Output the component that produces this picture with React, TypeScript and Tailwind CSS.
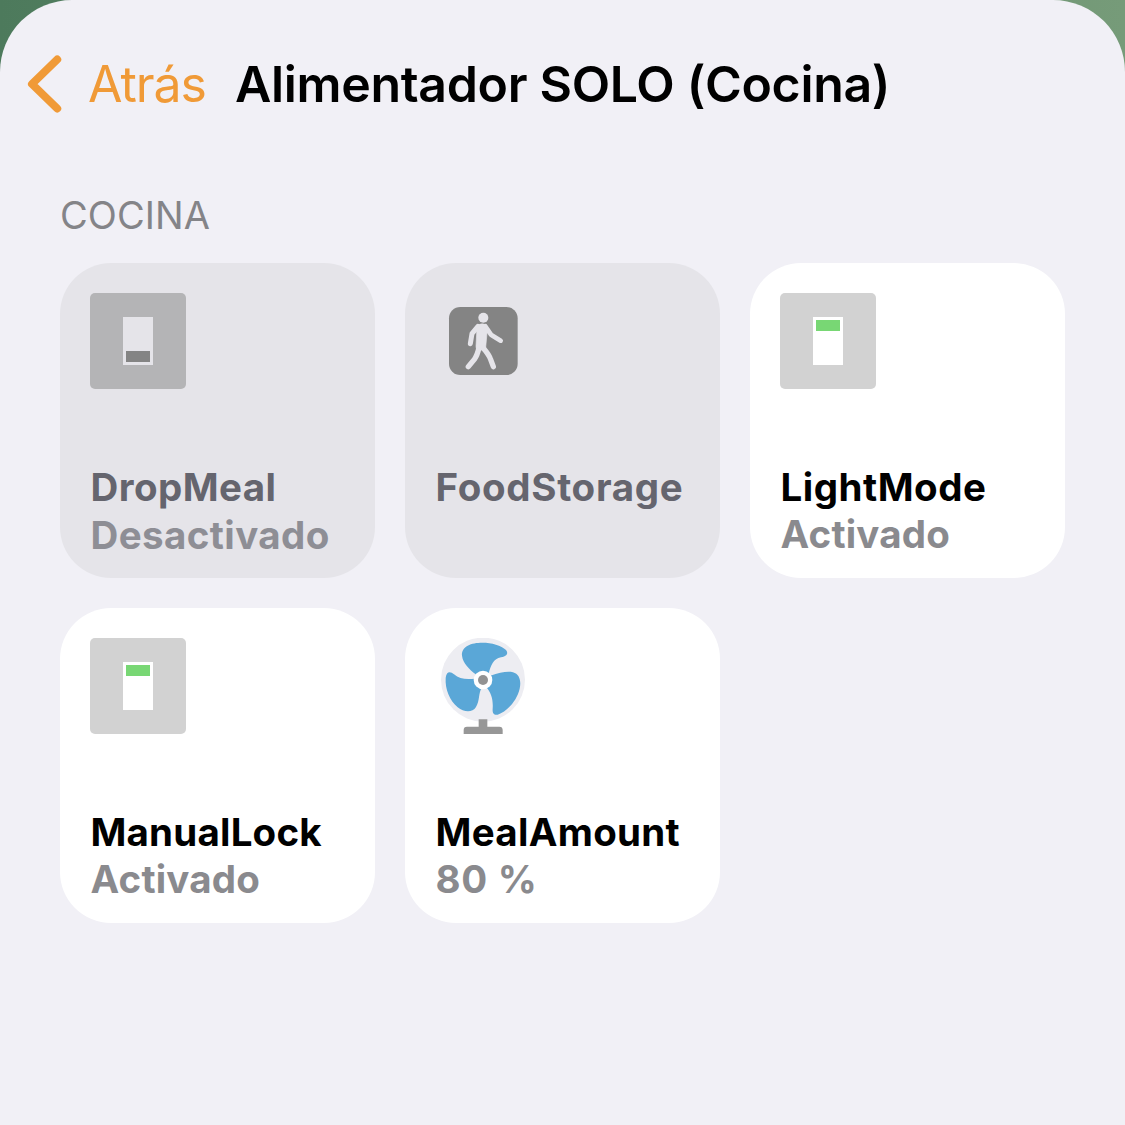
import type { ReactNode } from "react";

function SwitchIcon({ on }: { on: boolean }) {
  return (
    <div className={`flex size-24 items-center justify-center rounded-[5px] ${on ? "bg-[#d2d2d2]" : "bg-[#b4b4b6]"}`}>
      <div className={`flex h-12 w-[30px] flex-col p-[3px] ${on ? "justify-start bg-white" : "justify-end bg-[#e5e4e9]"}`}>
        <div className={`h-[11px] ${on ? "bg-[#78d774]" : "bg-[#848484]"}`} />
      </div>
    </div>
  );
}

function MotionIcon() {
  return (
    <svg className="size-24" viewBox="-15 -15 288 288">
      <rect x="27" y="27" width="206" height="204" rx="34" fill="#848484" />
      <g fill="#e5e4e9" stroke="#e5e4e9" strokeLinecap="round" strokeLinejoin="round">
        <circle cx="130" cy="59" r="15" stroke="none" />
        <path d="M115 80 Q127 75 138 80 Q143 84 142 94 L137 149 Q137 155 132 156 L114 156 Q107 153 108 145 L111 88 Z" strokeWidth="2" />
        <path d="M114 85 L96 107 L91 137" fill="none" strokeWidth="15" />
        <path d="M136 85 L153 110 L182 128" fill="none" strokeWidth="14" />
        <path d="M117 149 Q112 172 103 184 L85 206" fill="none" strokeWidth="16" />
        <path d="M129 149 Q147 170 151 182 L160 206" fill="none" strokeWidth="16" />
      </g>
    </svg>
  );
}

function FanIcon() {
  return (
    <svg className="size-24" viewBox="15 24 288 288">
      <circle cx="159" cy="149" r="126" fill="#ededf2" />
      <path d="M146 268h26v22h36q10 0 10 10v13H101v-13q0-10 10-10h35z" fill="#979797" />
      <g fill="#5aa7d7">
        <path d="M137 133C118 117 99 101 96 77C94 48 124 38 157 38C185 38 214 46 228 60C238 73 226 80 213 82C190 87 183 105 176 130Z" />
        <path d="M134 146C108 149 88 147 72 133C61 123 49 124 47 144C45 178 59 211 83 232C102 247 127 249 138 231C150 211 145 189 155 174Z" />
        <path d="M181 137C210 128 231 123 249 127C269 132 274 154 269 176C261 211 232 244 203 254C190 256 187 247 188 236C190 208 183 188 169 172Z" />
      </g>
      <circle cx="159" cy="150" r="28" fill="#fff" />
      <circle cx="159" cy="150" r="15" fill="#929292" />
    </svg>
  );
}

type CardProps = {
  icon: ReactNode;
  name: string;
  status?: string;
  active?: boolean;
  nameSpacing: string;
  statusSpacing?: string;
};

function Card({ icon, name, status, active, nameSpacing, statusSpacing = "" }: CardProps) {
  return (
    <div className={`flex h-[315px] flex-col rounded-[51px] px-[30px] pt-[30px] ${active ? "bg-white" : "bg-[#e5e4e9]"}`}>
      {icon}
      <div className="mt-[75px] ml-[0.5px] whitespace-nowrap text-[38.5px] leading-[47px] font-bold">
        <div className={`${nameSpacing} ${active ? "text-black" : "text-[#65656e]"}`}>
          <span>{name}</span>
        </div>
        {status && (
          <div className={`${statusSpacing} ${active ? "text-[#8a8a8e]" : "mt-px text-[#8e8e95]"}`}>
            <span>{status}</span>
          </div>
        )}
      </div>
    </div>
  );
}

export default function App() {
  return (
    <div className="h-[1125px] w-[1125px] overflow-hidden bg-linear-to-r from-[#4d7a5c] to-[#769b79] font-['Inter',sans-serif]">
      <div className="h-full rounded-t-[72px] bg-[#f1f0f6]">
        <header className="flex h-[168px] items-center pl-[27px] whitespace-nowrap">
          <svg className="h-[58px] w-[35px] shrink-0" viewBox="0 0 35 58" fill="none">
            <path d="M30.2 4.5 L5 29 L30.2 53.5" stroke="#f09a37" strokeWidth="8" strokeLinecap="round" strokeLinejoin="round" />
          </svg>
          <span className="ml-[26px] w-[147px] text-[50px] leading-[60px] tracking-[-1.1px] text-[#f09a37]">Atrás</span>
          <h1 className="text-[50px] leading-[60px] font-semibold tracking-[-0.33px] text-black">Alimentador SOLO (Cocina)</h1>
        </header>
        <main className="px-[60px] pt-6">
          <h2 className="h-[71px] text-[38px] leading-[47px] tracking-[0.05px] text-[#848488]">COCINA</h2>
          <div className="grid grid-cols-3 gap-[30px]">
            <Card icon={<SwitchIcon on={false} />} name="DropMeal" status="Desactivado" nameSpacing="tracking-[0.45px]" statusSpacing="tracking-[0.4px]" />
            <Card icon={<MotionIcon />} name="FoodStorage" nameSpacing="tracking-[0.7px]" />
            <Card icon={<SwitchIcon on />} name="LightMode" status="Activado" active nameSpacing="tracking-[0.5px]" statusSpacing="tracking-[0.2px]" />
            <Card icon={<SwitchIcon on />} name="ManualLock" status="Activado" active nameSpacing="tracking-[0.2px]" statusSpacing="tracking-[0.2px]" />
            <Card icon={<FanIcon />} name="MealAmount" status="80 %" active nameSpacing="tracking-[0.3px]" statusSpacing="tracking-[0.7px]" />
          </div>
        </main>
      </div>
    </div>
  );
}
